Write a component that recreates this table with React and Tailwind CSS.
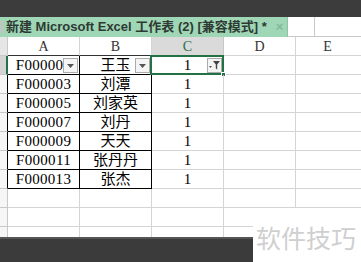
import React from 'react';

const rows = [
  ['F000000', '王玉', '1'],
  ['F000003', '刘潭', '1'],
  ['F000005', '刘家英', '1'],
  ['F000007', '刘丹', '1'],
  ['F000009', '天天', '1'],
  ['F000011', '张丹丹', '1'],
  ['F000013', '张杰', '1'],
];

const cellFont = { fontFamily: '"Liberation Serif", "Noto Sans CJK SC", serif' };

function DropButton({ filter }) {
  return (
    <div className="absolute right-[1px] top-[2px] w-[15px] h-[15px] border border-[#ababab] bg-[#f4f4f4] flex items-center justify-center">
      {filter ? (
        <svg width="13" height="11" viewBox="0 0 13 11">
          <path d="M1 6h3l-1.5 2z" fill="#555" />
          <path d="M5 1h7l-2.8 3.5v5l-1.4-1v-4z" fill="#444" />
        </svg>
      ) : (
        <svg width="7" height="4" viewBox="0 0 7 4">
          <path d="M0 0h7l-3.5 4z" fill="#555" />
        </svg>
      )}
    </div>
  );
}

function EmptyRow({ cut }) {
  return (
    <div className="flex h-[19px] shrink-0">
      <div className="w-[8px] border-r border-b border-[#c8c8c8] bg-[#f6f6f6]" />
      <div className="w-[72px] border-r border-b border-[#d4d4d4]" />
      <div className="w-[72px] border-r border-b border-[#d4d4d4]" />
      <div className="w-[72px] border-r border-b border-[#d4d4d4]" />
      {cut ? (
        <div className="w-[29px] border-b border-[#d4d4d4]" />
      ) : (
        <>
          <div className="w-[72px] border-r border-b border-[#d4d4d4]" />
          <div className="flex-1 border-b border-[#d4d4d4]" />
        </>
      )}
    </div>
  );
}

export default function App() {
  return (
    <div className="w-[361px] h-[262px] overflow-hidden bg-white flex flex-col" style={cellFont}>
      {/* window top */}
      <div className="h-[17px] bg-[#3c3c3c] shrink-0" />

      {/* title tab */}
      <div className="h-[20px] flex shrink-0">
        <div className="w-[288px] bg-[#9fd6b6] flex items-center border-r border-[#8cc3a3]">
          <div className="w-[4px] h-[12px] bg-[#b9c9bf] mr-[2px]" />
          <span
            className="text-[13px] font-bold text-[#2e3a33] whitespace-nowrap"
            style={{ fontFamily: '"Liberation Sans", "Noto Sans CJK SC", sans-serif' }}
          >
            新建 Microsoft Excel 工作表 (2) [兼容模式] *
          </span>
          <span className="ml-[9px] text-[13px] font-bold text-[#82bb9a]" style={{ fontFamily: '"Liberation Sans", sans-serif' }}>
            ×
          </span>
        </div>
        <div className="w-[27px] border-r border-b border-[#c8c8c8]" />
        <div className="flex-1 border-b border-[#c8c8c8]" />
      </div>

      {/* column headers */}
      <div className="flex h-[19px] shrink-0 text-[14px] text-[#333]">
        <div className="w-[8px] bg-[#e6e6e6] border-r border-b border-[#c8c8c8]" />
        <div className="w-[72px] border-r border-[#d4d4d4] border-b border-b-[#333] flex items-center justify-center">A</div>
        <div className="w-[72px] border-r border-[#d4d4d4] border-b border-b-[#333] flex items-center justify-center">B</div>
        <div className="w-[72px] bg-[#dadada] border-r border-[#c8c8c8] flex items-center justify-center text-[#217346]">C</div>
        <div className="w-[72px] border-r border-b border-[#d4d4d4] flex items-center justify-center">D</div>
        <div className="flex-1 border-b border-[#d4d4d4] flex items-center justify-center pr-[2px]">E</div>
      </div>

      {/* data rows */}
      {rows.map(([a, b, c], i) => (
        <div key={a} className="flex h-[19px] shrink-0 text-[15px] text-black">
          {i === 0 ? (
            <div className="w-[8px] bg-[#d4d4d4] border-r-2 border-r-[#217346] border-b border-b-[#c8c8c8]" />
          ) : (
            <div className="w-[8px] bg-[#f6f6f6] border-r border-r-black border-b border-b-[#c8c8c8]" />
          )}
          <div className="relative w-[72px] border-r border-b border-black flex items-center justify-center tracking-[0.3px] overflow-hidden">
            {a}
            {i === 0 && <DropButton />}
          </div>
          <div className="relative w-[72px] border-r border-b border-black flex items-center justify-center">
            {b}
            {i === 0 && <DropButton />}
          </div>
          <div className="relative w-[72px] border-r border-b border-[#d4d4d4] flex items-center justify-center">
            {c}
            {i === 0 && (
              <>
                <DropButton filter />
                <div className="absolute left-[-2px] top-[-1px] right-[-1px] bottom-[-1px] border-2 border-[#217346]" />
                <div className="absolute right-[-3px] bottom-[-3px] w-[5px] h-[5px] bg-[#217346] border border-white" />
              </>
            )}
          </div>
          <div className="w-[72px] border-r border-b border-[#d4d4d4]" />
          <div className="flex-1 border-b border-[#d4d4d4]" />
        </div>
      ))}

      <EmptyRow />

      {/* lower area */}
      <div className="flex flex-1 min-h-0">
        <div className="w-[253px] flex flex-col">
          <div className="h-[29px] overflow-hidden flex flex-col">
            <EmptyRow cut />
            <EmptyRow cut />
          </div>
          <div className="flex-1 bg-[#3b3b3b] border-t-2 border-[#555]" />
        </div>
        <div className="flex-1 bg-white pl-[3px] pt-[17px]">
          <span
            className="text-[25px] text-[#cfcfcf] whitespace-nowrap leading-none"
            style={{ fontFamily: '"Noto Sans CJK SC", sans-serif' }}
          >
            软件技巧
          </span>
        </div>
      </div>
    </div>
  );
}
